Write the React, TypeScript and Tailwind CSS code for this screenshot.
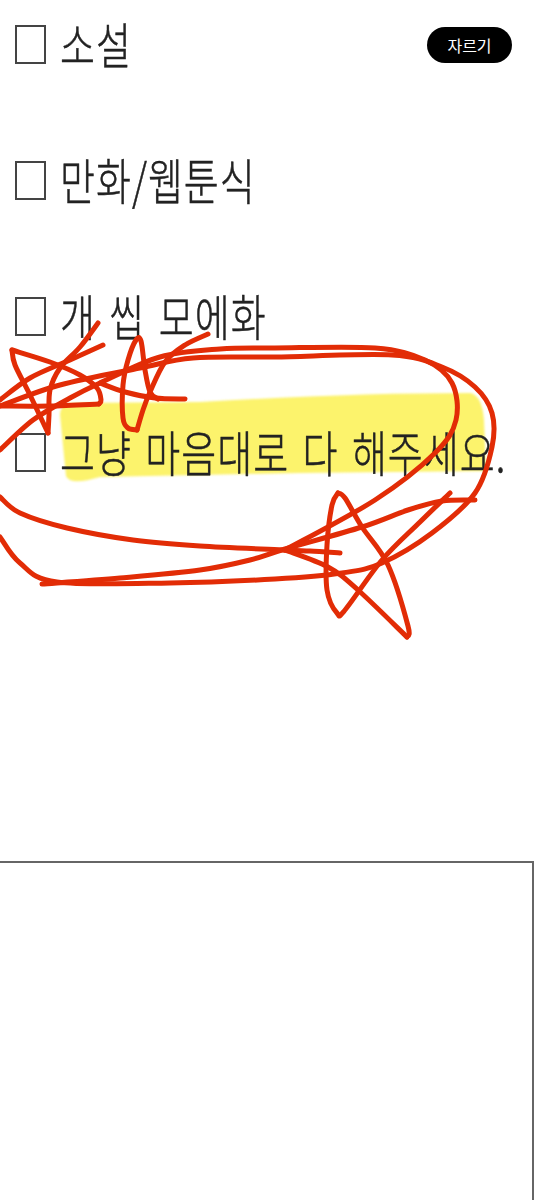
const RED = '#e22c06'

type Pt = [number, number]

// catmull-rom through the hand-drawn points
function smooth(pts: Pt[]) {
  let d = `M ${pts[0][0]} ${pts[0][1]}`
  for (let i = 0; i < pts.length - 1; i++) {
    const p0 = pts[i - 1] ?? pts[i]
    const p1 = pts[i]
    const p2 = pts[i + 1]
    const p3 = pts[i + 2] ?? p2
    const c1x = p1[0] + (p2[0] - p0[0]) / 6
    const c1y = p1[1] + (p2[1] - p0[1]) / 6
    const c2x = p2[0] - (p3[0] - p1[0]) / 6
    const c2y = p2[1] - (p3[1] - p1[1]) / 6
    d += ` C ${c1x} ${c1y} ${c2x} ${c2y} ${p2[0]} ${p2[1]}`
  }
  return d
}

// split at the sharp corners so the curve doesn't overshoot
const strokes: Pt[][] = [
  // left star
  [[98, 323], [80, 347], [60, 368], [50, 390], [49, 415], [48, 433]],
  [[48, 433], [30, 395], [15, 365], [12, 350]],
  [[12, 350], [50, 362], [80, 375], [97, 388], [101, 400], [99, 404]],
  [[99, 404], [50, 406], [0, 406]],
  [[103, 345], [70, 360], [30, 378], [0, 400]],
  // small star
  [[185, 399], [155, 398], [125, 392], [100, 383]],
  [[208, 334], [185, 345], [165, 362], [150, 392], [143, 410], [137, 430]],
  [[137, 430], [128, 428], [123, 418], [123, 385], [128, 360], [136, 340], [141, 341], [145, 370], [150, 392], [158, 399]],
  // loops round the last line
  [[0, 450], [33, 420], [70, 398], [100, 383], [160, 357], [220, 349], [275, 348], [375, 348], [425, 360], [452, 383], [456, 420], [435, 453], [375, 500], [285, 550]],
  [[285, 550], [200, 546], [133, 540], [67, 528], [20, 513], [0, 497]],
  [[0, 537], [20, 563], [57, 582], [170, 583], [275, 579], [342, 573], [382, 563], [432, 533], [475, 493], [492, 447], [492, 413], [475, 387], [442, 367], [392, 355], [275, 357], [193, 358], [140, 368], [60, 385], [0, 406]],
  [[42, 584], [120, 578], [200, 570], [250, 560], [285, 549], [362, 527], [408, 510], [442, 501], [475, 500]],
  // bottom right star
  [[340, 553], [310, 551], [285, 550]],
  [[285, 550], [328, 567], [358, 590], [407, 637]],
  [[407, 637], [408, 626], [388, 565], [362, 527], [345, 498], [338, 493]],
  [[338, 493], [332, 505], [327, 545], [327, 590], [337, 613], [345, 610], [382, 560], [420, 522], [450, 493]],
]

function CheckRow({ label, children }: { label: string; children?: React.ReactNode }) {
  return (
    <div className="flex h-[39px] items-center justify-between">
      <div className="flex items-center gap-[14px]">
        <div className="h-[39px] w-[31px] border-2 border-[#444] blur-[0.3px]" />
        <span className="origin-center -translate-y-[2px] scale-y-[1.3] whitespace-nowrap text-[38px] font-light leading-none tracking-[1px] text-[#222] blur-[0.4px] [-webkit-text-stroke:0.4px_#222] [word-spacing:4px]">
          {label}
        </span>
      </div>
      {children}
    </div>
  )
}

export default function App() {
  return (
    <div
      className="relative h-[1200px] w-[555px] overflow-hidden bg-white"
      style={{ fontFamily: '"Noto Sans CJK KR", "Noto Sans", sans-serif' }}
    >
      {/* highlighter sits under the text */}
      <svg className="absolute inset-0 blur-[1px]" width="555" height="1200" viewBox="0 0 555 1200">
        <path
          d="M 60 415 Q 60 403 75 403 L 200 402 Q 350 393 470 393 Q 482 395 484 420 L 486 471 L 300 473 L 100 477 Q 70 486 66 476 Z"
          fill="#fcf36c"
        />
      </svg>

      <div className="relative flex flex-col gap-[97px] pl-[15px] pr-[43px] pt-[25px]">
        <CheckRow label="소설">
          <button className="flex h-[36px] w-[85px] items-center justify-center rounded-full bg-black text-[16px] font-normal text-white">
            자르기
          </button>
        </CheckRow>
        <CheckRow label="만화/웹툰식" />
        <CheckRow label="개 씹 모에화" />
        <CheckRow label="그냥 마음대로 다 해주세요." />
      </div>

      <div className="relative ml-[-4px] mt-[389px] h-[339px] w-[538px] border-r-2 border-t-2 border-[#666]" />

      {/* red pen scribbles on top */}
      <svg className="absolute inset-0" width="555" height="1200" viewBox="0 0 555 1200" fill="none">
        {strokes.map((pts, i) => (
          <path key={i} d={smooth(pts)} stroke={RED} strokeWidth="5" strokeLinecap="round" strokeLinejoin="round" />
        ))}
      </svg>
    </div>
  )
}
